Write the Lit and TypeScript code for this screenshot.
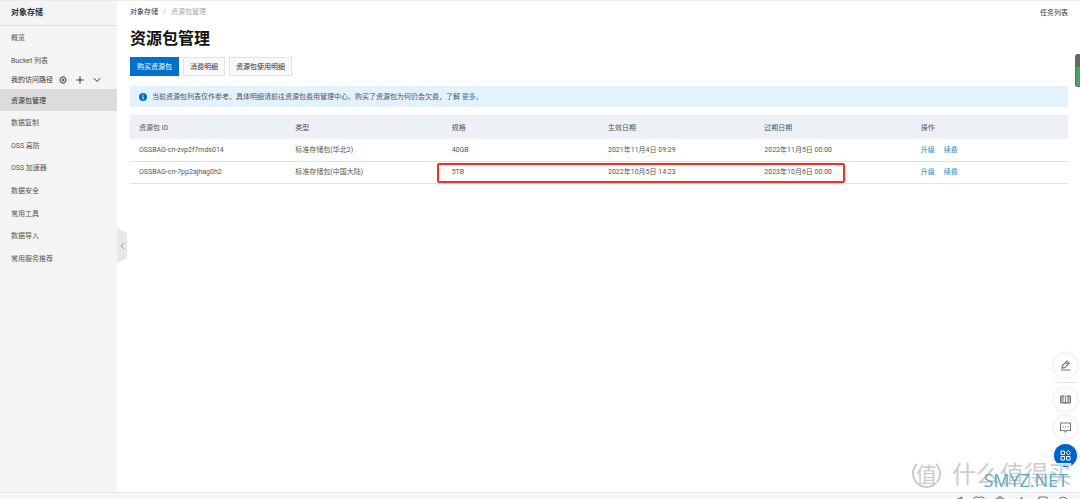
import { LitElement, html, css, svg } from "lit";
import { customElement } from "lit/decorators.js";

const NAV_TOP = ["概览", "Bucket 列表"];
const NAV_REST = ["数据复制", "OSS 高防", "OSS 加速器", "数据安全", "常用工具", "数据导入", "常用服务推荐"];
const COLUMNS = ["资源包 ID", "类型", "规格", "生效日期", "过期日期", "操作"];
const PACKS = [
  ["OSSBAG-cn-zvp2f7mds014", "标准存储包(华北2)", "40GB", "2021年11月4日 09:29", "2022年11月5日 00:00"],
  ["OSSBAG-cn-7pp2ajhag0h2", "标准存储包(中国大陆)", "5TB", "2022年10月5日 14:23", "2023年10月6日 00:00"],
];

const TRAY = [
  svg`<path d="M1 5 10 1 8 11 5 7ZM5 7l5-6"/>`,
  svg`<path d="M2 1h3l1 1 1-1h3l1 1v8H1V2zM4 4l2 2 2-2M6 6v4"/>`,
  svg`<path d="M1 3h10M4 3V1h4v2M2 3v8h8V3M5 5v4M7 5v4"/>`,
  svg`<path d="M1 4h3l3-3v10M9 3l2 2M9 6h2"/>`,
  svg`<path d="M3 1h8v7H3zM3 3H1v8h7"/>`,
  svg`<circle cx="6" cy="5" r="4"/><path d="m9 8 3 3"/>`,
];

@customElement("app-root")
export class AppRoot extends LitElement {
  static styles = css`
    :host {
      display: flex;
      flex-direction: column;
      height: 100vh;
      overflow: hidden;
      position: relative;
      box-sizing: border-box;
      border-top: 1px solid #ececec;
      background: #fff;
      color: #555;
      font: 7px/10px Roboto, "Noto Sans CJK SC", sans-serif;
    }
    * { box-sizing: border-box; }
    a { color: inherit; text-decoration: none; }
    button { font: inherit; color: inherit; margin: 0; padding: 0; border: 0; background: none; cursor: pointer; }
    svg { display: block; flex: none; fill: none; stroke: currentColor; }
    .body { flex: 1; min-height: 0; display: flex; }
    .side { width: 117px; flex: none; background: #f4f4f4; }
    .side-title { height: 25px; padding-left: 11px; line-height: 24px; font-size: 8px; font-weight: 700; color: #333; border-bottom: 1px solid #dedede; }
    .item { display: flex; align-items: center; height: 100%; padding: 2px 0 0 11px; }
    .group { display: grid; grid-auto-rows: 1fr; }
    .group.top { height: 45px; }
    .group.rest { height: 158px; }
    .path { display: flex; align-items: center; height: 18px; padding-left: 11px; color: #333; }
    .path button { margin-left: 9px; }
    .path span + button { margin-left: 6px; }
    .current { height: 22px; background: #dcdcdc; color: #333; }
    .fold { align-self: flex-start; margin-top: 227px; width: 10px; height: 35px; margin-right: -10px; background: #e8e8e8; color: #999; clip-path: polygon(0 0, 100% 14%, 100% 86%, 0 100%); display: grid; place-items: center; }
    .main { flex: 1; min-width: 0; padding: 6px 12px 0 13px; }
    .bar { display: flex; justify-content: space-between; color: #333; }
    .crumbs { display: flex; gap: 5px; }
    .crumbs .dim { color: #aaa; }
    .tasks { padding-top: 1px; }
    h1 { margin: 10px 0 7px; font-size: 16px; line-height: 22px; color: #111; font-weight: 700; }
    .actions { display: flex; gap: 4px; }
    .btn { height: 19px; padding: 0 6px; border: 1px solid #e3e3e3; background: #f9f9f9; color: #333; }
    .btn.primary { background: #0070cc; border-color: #0070cc; color: #fff; }
    .notice { display: flex; align-items: center; height: 21px; margin: 10px 0 8px; padding-left: 9px; background: #e3f2fd; }
    .notice svg { margin-right: 5px; }
    .notice a, td a { color: #2b80d0; }
    .table-box { position: relative; }
    table { width: 100%; table-layout: fixed; border-collapse: collapse; }
    th, td { padding: 0 0 0 9px; text-align: left; font-weight: 400; }
    th { height: 24px; padding-top: 2px; background: #edf1f7; }
    td { height: 22px; border-bottom: 1px solid #e2e2e2; }
    td a + a { margin-left: 9px; }
    .frame { position: absolute; left: calc(100% / 3 - 6px); width: calc(100% / 3 + 96px); bottom: 1px; height: 20px; border: 2px solid #f03024; border-radius: 2px; }
    .footer { flex: none; height: 7px; overflow: hidden; display: flex; justify-content: flex-end; gap: 9px; padding: 3px 11px 0 0; background: #f7f7f7; border-top: 1px solid #e8e8e8; color: #777; }
    .thumb { position: absolute; right: 0; top: 53px; width: 5px; height: 33px; border-radius: 3px 0 0 3px; background: linear-gradient(#666 38%, #48a35c 38%); border: solid #666; border-width: 1px 0 1px 1px; }
    .float { position: absolute; right: 3px; bottom: 32px; width: 23px; display: flex; flex-direction: column; gap: 5px; }
    .float button { width: 23px; height: 23px; border-radius: 50%; background: #fff; box-shadow: 0 0 4px #0002; display: grid; place-items: center; color: #777; }
    .float .apps { background: #0064c8; color: #fff; }
    .float hr { width: 100%; margin: 0; border: 0; border-top: 1px solid #e6e6e6; }
    .mark { position: absolute; right: 8px; bottom: 10px; display: flex; align-items: center; gap: 11px; font-family: "Noto Sans CJK SC", sans-serif; font-size: 24px; line-height: 32px; color: #ccc; text-shadow: 1px -1px 0 #fff; }
    .seal { width: 29px; height: 29px; border-radius: 50%; border: 2px solid #ccc; border-top-color: #fff; display: grid; place-items: center; font-size: 21px; line-height: 23px; }
    .site { position: absolute; right: 12px; bottom: 8px; font-family: "Open Sans", sans-serif; font-size: 18px; line-height: 22px; color: #58adbd; }
  `;

  render() {
    return html`
      <div class="body">
        <nav class="side">
          <div class="side-title">对象存储</div>
          <div class="group top">${NAV_TOP.map((t) => html`<a class="item" href="#">${t}</a>`)}</div>
          <div class="path">
            <span>我的访问路径</span>
            <button aria-label="设置"><svg width="8" height="8" viewBox="0 0 8 8"><path d="M2.400 1h3.200L7.200 4 5.600 7H2.400L.8 4Z"/><circle cx="4" cy="4" r="1"/></svg></button>
            <button aria-label="添加"><svg width="8" height="8" viewBox="0 0 8 8"><path d="M4 .5v7M.5 4h7"/></svg></button>
            <button aria-label="展开"><svg width="8" height="8" viewBox="0 0 8 8"><path d="m.8 2.200 3.200 3.200 3.200-3.200"/></svg></button>
          </div>
          <div class="current"><a class="item" href="#">资源包管理</a></div>
          <div class="group rest">${NAV_REST.map((t) => html`<a class="item" href="#">${t}</a>`)}</div>
        </nav>
        <button class="fold" aria-label="收起"><svg width="5" height="8" viewBox="0 0 5 8"><path d="M4.200.8 1 4l3.200 3.200"/></svg></button>
        <main class="main">
          <div class="bar">
            <div class="crumbs"><a href="#">对象存储</a><span class="dim">/</span><span class="dim">资源包管理</span></div>
            <a class="tasks" href="#">任务列表</a>
          </div>
          <h1>资源包管理</h1>
          <div class="actions">
            <button class="btn primary">购买资源包</button>
            <button class="btn">消费明细</button>
            <button class="btn">资源包使用明细</button>
          </div>
          <div class="notice">
            <svg width="8" height="8" viewBox="0 0 8 8"><circle cx="4" cy="4" r="4" fill="#0070cc" stroke="none"/><path d="M4 3.400v2.900M4 1.500v1.100" stroke="#fff"/></svg>
            <span>当前资源包列表仅作参考。具体明细请前往资源包费用管理中心。购买了资源包为何仍会欠费，了解 <a href="#">更多</a>。</span>
          </div>
          <div class="table-box">
            <table>
              <thead><tr>${COLUMNS.map((c) => html`<th>${c}</th>`)}</tr></thead>
              <tbody>
                ${PACKS.map((p) => html`<tr>${p.map((v) => html`<td>${v}</td>`)}<td><a href="#">升级</a><a href="#">续费</a></td></tr>`)}
              </tbody>
            </table>
            <div class="frame"></div>
          </div>
        </main>
      </div>
      <footer class="footer">${TRAY.map((i) => html`<svg width="12" height="12" viewBox="0 0 12 12">${i}</svg>`)}</footer>
      <div class="thumb"></div>
      <div class="float">
        <button aria-label="编辑"><svg width="11" height="11" viewBox="0 0 11 11"><path d="M1 10h9.500M2 8l.5-2.500L7 1l2.200 2.200L4.600 7.600ZM5.700 2.400l2.200 2.200" stroke-width="1.200"/></svg></button>
        <hr />
        <button aria-label="文档"><svg width="11" height="11" viewBox="0 0 11 11"><path d="M.5 2h4l1 .7 1-.7h4v7h-4l-1 .7-1-.7h-4zM5.500 2.700v7M2 2v7M9 2v7M2.500 8.500h6M3 1.500v6M8 1.500v6"/></svg></button>
        <button aria-label="反馈"><svg width="11" height="11" viewBox="0 0 11 11"><path d="M.5 1h10v7.500H6.500l-1 1.500-1-1.500h-4z" stroke-width="1.200"/><path d="M2.500 5h1.200M5 5h1.200M7.400 5h1.200"/></svg></button>
        <button class="apps" aria-label="应用"><svg width="11" height="11" viewBox="0 0 11 11"><path d="M1 1h3.500v3.500H1zM1 6.500h3.500V10H1zM6.500 6.500H10V10H6.500zM8.300.5l2.200 2.200-2.200 2.200-2.200-2.200z"/></svg></button>
      </div>
      <div class="mark"><span class="seal">值</span><span>什么值得买</span></div>
      <div class="site">SMYZ.NET</div>
    `;
  }
}
